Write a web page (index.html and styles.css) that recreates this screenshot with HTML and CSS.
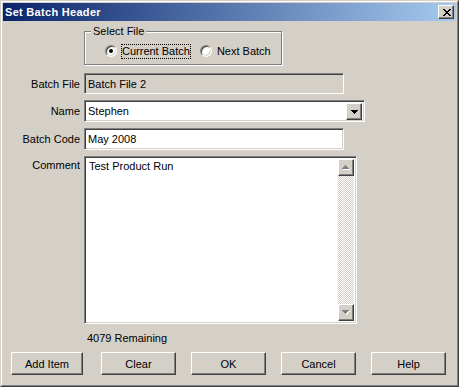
FILE: index.html
```html
<!DOCTYPE html>
<html lang="en">

<head>
    <meta charset="UTF-8">
    <meta name="viewport" content="width=device-width, initial-scale=1.0">
    <title>Set Batch Header</title>
    <link rel="stylesheet" href="styles.css">
</head>

<body>
    <div class="window">
        <div class="frame">
            <div class="titlebar">
                <span class="title">Set Batch Header</span>
                <span class="close raised">
                    <svg width="8" height="7" viewBox="0 0 8 7" shape-rendering="crispEdges">
                        <path fill="#000" d="M0 0h2v1H0z M6 0h2v1H6z M1 1h2v1H1z M5 1h2v1H5z M2 2h4v1H2z M3 3h2v1H3z M2 4h4v1H2z M1 5h2v1H1z M5 5h2v1H5z M0 6h2v1H0z M6 6h2v1H6z" />
                    </svg>
                </span>
            </div>

            <div class="client">
                <div class="group">
                    <span class="legend">Select File</span>
                    <label class="option"><span class="radio checked"></span><span class="caption focus">Current Batch</span></label>
                    <label class="option"><span class="radio"></span><span class="caption">Next Batch</span></label>
                </div>

                <div class="form">
                    <span class="label">Batch File</span>
                    <div class="edit readonly short">Batch File 2</div>

                    <span class="label">Name</span>
                    <div class="edit combo">
                        <span class="combo-text">Stephen</span>
                        <span class="drop raised">
                            <svg width="7" height="4" viewBox="0 0 7 4" shape-rendering="crispEdges">
                                <path fill="#000" d="M0 0h7v1H0z M1 1h5v1H1z M2 2h3v1H2z M3 3h1v1H3z" />
                            </svg>
                        </span>
                    </div>

                    <span class="label">Batch Code</span>
                    <div class="edit short">May 2008</div>

                    <span class="label label-top">Comment</span>
                    <div class="edit memo">
                        <div class="memo-text">Test Product Run</div>
                        <div class="scrollbar">
                            <span class="scroll-btn raised">
                                <svg width="8" height="5" viewBox="0 0 8 5" shape-rendering="crispEdges">
                                    <path fill="#fff" d="M4 1h1v1H4z M3 2h3v1H3z M2 3h5v1H2z M1 4h7v1H1z" />
                                    <path fill="#808080" d="M3 0h1v1H3z M2 1h3v1H2z M1 2h5v1H1z M0 3h7v1H0z" />
                                </svg>
                            </span>
                            <span class="track"></span>
                            <span class="scroll-btn raised">
                                <svg width="8" height="5" viewBox="0 0 8 5" shape-rendering="crispEdges">
                                    <path fill="#fff" d="M1 1h7v1H1z M2 2h5v1H2z M3 3h3v1H3z M4 4h1v1H4z" />
                                    <path fill="#808080" d="M0 0h7v1H0z M1 1h5v1H1z M2 2h3v1H2z M3 3h1v1H3z" />
                                </svg>
                            </span>
                        </div>
                    </div>
                </div>

                <div class="remaining">4079 Remaining</div>

                <div class="buttons">
                    <span class="button raised add">Add Item</span>
                    <span class="button raised">Clear</span>
                    <span class="button raised">OK</span>
                    <span class="button raised">Cancel</span>
                    <span class="button raised">Help</span>
                </div>
            </div>
        </div>
    </div>
</body>

</html>
```

FILE: styles.css
```css
body {
    margin: 0;
    padding: 0;
    font-family: "Liberation Sans", Arial, sans-serif;
    font-size: 11px;
    color: #000;
    background-color: #d4d0c8;
}

/* window frame: two bevel lines and one face line */
.window {
    box-sizing: border-box;
    width: 459px;
    height: 387px;
    border: 1px solid;
    border-color: #d4d0c8 #404040 #404040 #d4d0c8;
}

.frame {
    box-sizing: border-box;
    height: 100%;
    padding: 1px;
    border: 1px solid;
    border-color: #fff #808080 #808080 #fff;
}

.titlebar {
    display: flex;
    align-items: center;
    justify-content: space-between;
    height: 18px;
    background: linear-gradient(to right, #0a246a, #a6caf0);
}

.title {
    padding-left: 2px;
    color: #fff;
    font-weight: bold;
    letter-spacing: 0.3px;
}

.raised {
    box-sizing: border-box;
    background-color: #d4d0c8;
    border: 1px solid;
    border-color: #fff #404040 #404040 #fff;
    box-shadow: inset -1px -1px 0 #808080, inset 1px 1px 0 #d4d0c8;
}

.close {
    display: flex;
    align-items: center;
    justify-content: center;
    width: 16px;
    height: 14px;
    margin-right: 2px;
    padding-left: 1px;
}

.client {
    overflow: hidden;
}

.group {
    position: relative;
    display: flex;
    align-items: center;
    box-sizing: border-box;
    width: 198px;
    height: 34px;
    margin: 10px 0 0 81px;
    padding: 6px 0 0 20px;
    border: 1px solid #808080;
    box-shadow: 1px 1px 0 #fff, inset 1px 1px 0 #fff;
}

.legend {
    position: absolute;
    top: -7px;
    left: 6px;
    padding: 0 2px;
    line-height: 13px;
    background-color: #d4d0c8;
}

.option {
    display: flex;
    align-items: center;
    margin-right: 9px;
}

.radio {
    position: relative;
    box-sizing: border-box;
    width: 12px;
    height: 12px;
    margin-right: 4px;
    border-radius: 50%;
    background-color: #fff;
    border: 1px solid;
    border-color: #808080 #fff #fff #808080;
    box-shadow: inset 1px 1px 0 #404040, inset -1px -1px 0 #d4d0c8;
}

.radio.checked::after {
    content: "";
    position: absolute;
    top: 3px;
    left: 3px;
    width: 4px;
    height: 4px;
    border-radius: 50%;
    background-color: #000;
}

.caption {
    border: 1px dotted transparent;
    line-height: 13px;
}

.caption.focus {
    border-color: #000;
}

.form {
    display: grid;
    grid-template-columns: 77px auto;
    column-gap: 4px;
    row-gap: 6px;
    align-items: center;
    margin-top: 8px;
}

.label {
    text-align: right;
}

.label-top {
    align-self: start;
    padding-top: 3px;
}

.edit {
    display: flex;
    align-items: center;
    box-sizing: border-box;
    height: 22px;
    padding-left: 3px;
    background-color: #fff;
    border: 1px solid;
    border-color: #808080 #fff #fff #808080;
    box-shadow: inset 1px 1px 0 #404040, inset -1px -1px 0 #d4d0c8;
}

.short {
    width: 260px;
}

.readonly {
    height: 21px;
    background-color: #d4d0c8;
}

.combo {
    width: 281px;
    padding: 2px 2px 2px 3px;
}

.combo-text {
    flex: 1;
}

.drop {
    display: flex;
    align-items: center;
    justify-content: center;
    width: 16px;
    height: 17px;
    padding-top: 1px;
}

.memo {
    align-items: stretch;
    width: 273px;
    height: 168px;
    padding: 2px;
}

.memo-text {
    flex: 1;
    padding: 1px 0 0 2px;
    line-height: 13px;
}

.scrollbar {
    display: flex;
    flex-direction: column;
    width: 16px;
}

.scroll-btn {
    display: flex;
    align-items: center;
    justify-content: center;
    width: 16px;
    height: 17px;
}

.track {
    flex: 1;
    background-color: #fff;
    background-image: repeating-conic-gradient(#d4d0c8 0 25%, #fff 0 50%);
    background-size: 2px 2px;
}

.remaining {
    margin: 8px 0 0 84px;
    line-height: 13px;
}

.buttons {
    display: flex;
    gap: 15px;
    margin: 7px 0 0 8px;
}

.button {
    display: flex;
    align-items: center;
    justify-content: center;
    width: 75px;
    height: 23px;
}

.button.add {
    width: 72px;
    margin-right: 3px;
}
```
